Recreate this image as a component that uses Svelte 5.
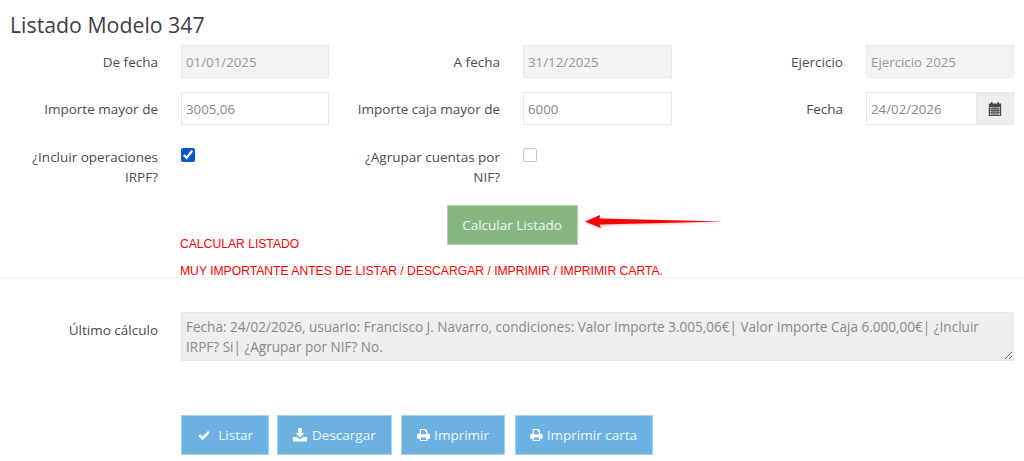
<script>
  // Buttons at the bottom of the listing form
  const actions = [
    { label: "Listar", icon: "check" },
    { label: "Descargar", icon: "download" },
    { label: "Imprimir", icon: "print" },
    { label: "Imprimir carta", icon: "print" }
  ];

  let incluirIrpf = true;
  let agruparNif = false;

  const ultimoCalculo =
    "Fecha: 24/02/2026, usuario: Francisco J. Navarro, condiciones: Valor Importe 3.005,06€| Valor Importe Caja 6.000,00€| ¿Incluir IRPF? Si| ¿Agrupar por NIF? No.";
</script>

<div class="page">
  <h1>Listado Modelo 347</h1>

  <form class="grid" on:submit|preventDefault>
    <label for="de">De fecha</label>
    <input id="de" class="ctl" value="01/01/2025" disabled />
    <label for="a">A fecha</label>
    <input id="a" class="ctl" value="31/12/2025" disabled />
    <label for="ej">Ejercicio</label>
    <input id="ej" class="ctl" value="Ejercicio 2025" disabled />

    <label for="imp">Importe mayor de</label>
    <input id="imp" class="ctl" value="3005,06" />
    <label for="caja">Importe caja mayor de</label>
    <input id="caja" class="ctl" value="6000" />
    <label for="fecha">Fecha</label>
    <div class="group">
      <input id="fecha" class="ctl" value="24/02/2026" />
      <span class="addon">
        <svg width="14" height="14" viewBox="0 0 14 14" aria-hidden="true">
          <path fill="#4a4a4a" d="M3 0h1.5v1.5h5V0H11v1.5h2.2V14H.8V1.5H3zM2 5v8h10V5z" />
          <path stroke="#4a4a4a" stroke-width="1" d="M2 6.7h10M2 8.7h10M2 10.8h10M4 5v8M6 5v8M8 5v8M10 5v8" />
        </svg>
      </span>
    </div>

    <label for="irpf" class="tall">¿Incluir operaciones IRPF?</label>
    <div class="check"><input id="irpf" type="checkbox" bind:checked={incluirIrpf} /></div>
    <label for="nif" class="tall">¿Agrupar cuentas por NIF?</label>
    <div class="check"><input id="nif" type="checkbox" bind:checked={agruparNif} /></div>
  </form>

  <div class="calc">
    <button type="button" class="btn calc-btn">Calcular Listado</button>
    <svg class="arrow" width="140" height="20" viewBox="0 0 140 20" aria-hidden="true">
      <path fill="#f00" d="M1 9.5 16 3 15.5 6.5 139 9.5 15.5 12.5 17 16z" />
    </svg>
  </div>

  <div class="notes">
    <p>CALCULAR LISTADO</p>
    <p>MUY IMPORTANTE ANTES DE LISTAR / DESCARGAR / IMPRIMIR / IMPRIMIR CARTA.</p>
  </div>

  <hr />

  <div class="last">
    <label for="ultimo">Último cálculo</label>
    <textarea id="ultimo" rows="2" readonly value={ultimoCalculo}></textarea>
  </div>

  <div class="actions">
    {#each actions as action}
      <button type="button" class="btn action">
        <svg width="14" height="14" viewBox="0 0 14 14" aria-hidden="true">
          {#if action.icon === "check"}
            <path fill="none" stroke="#fff" stroke-width="3" d="M1.5 7.2 5.2 10.8 12.5 3.4" />
          {:else if action.icon === "download"}
            <path fill="#fff" d="M5.2 0h3.6v5h2.6L7 9.6 2.6 5h2.6zM0 9h3.8L7 11.4 10.2 9H14v4.6H0zM10.6 11.2h1v1h-1z" />
          {:else}
            <path fill="#fff" fill-rule="evenodd" d="M3 .5h6.2L11 2.3V5.5h1.2c.9 0 1.5.6 1.5 1.5v4.2H11v2.3H3v-2.3H.3V7c0-.9.6-1.5 1.5-1.5H3zM4.2 1.6v4.6h5.6V3.4H8.5V1.6zM4.2 9.7v2.7h5.6V9.7z" />
          {/if}
        </svg>
        <span>{action.label}</span>
      </button>
    {/each}
  </div>
</div>

<style>
  :global(body) {
    background: #fff;
  }

  .page {
    font-family: "Open Sans", sans-serif;
    font-size: 13.5px;
    color: #4c4c4c;
    height: 461px;
    overflow: hidden;
    position: relative;
  }

  h1 {
    margin: 0;
    padding: 11px 0 0 10px;
    font-size: 21.3px;
    line-height: 28px;
    font-weight: 400;
    color: #3f3f3f;
  }

  .grid {
    display: grid;
    grid-template-columns: 158px 148px 148px 149px 148px 148px;
    column-gap: 23px;
    row-gap: 14px;
    margin-top: 6px;
  }

  label {
    text-align: right;
    line-height: 20px;
    padding-top: 7px;
    color: #4c4c4c;
  }

  label.tall {
    padding-top: 8px;
    padding-left: 12px;
  }

  .ctl {
    box-sizing: border-box;
    width: 100%;
    height: 33px;
    padding: 0 4px;
    border: 1px solid #e8e8e8;
    background: #fff;
    color: #888;
    font: inherit;
    font-size: 13.3px;
    outline: none;
    margin: 0;
    min-width: 0;
  }

  .ctl:disabled {
    background: #f3f3f3;
    color: #999;
    opacity: 1;
  }

  .group {
    display: flex;
  }

  .addon {
    flex: 0 0 37px;
    height: 33px;
    box-sizing: border-box;
    border: 1px solid #e8e8e8;
    border-left: none;
    background: #eee;
    display: flex;
    align-items: center;
    justify-content: center;
  }

  .check {
    padding-top: 9px;
  }

  .check input {
    display: block;
    width: 14px;
    height: 14px;
    margin: 0;
    accent-color: #0b57d0;
  }

  .check input:not(:checked) {
    appearance: none;
    box-sizing: border-box;
    border: 1px solid #c8c8cc;
    border-radius: 2px;
    background: #fff;
  }

  .calc {
    position: relative;
    display: flex;
    justify-content: center;
    margin-top: 18px;
  }

  .btn {
    font: inherit;
    border: 1px solid rgba(255, 255, 255, 0.35);
    color: #f2f2f2;
    cursor: pointer;
    white-space: nowrap;
  }

  .calc-btn {
    box-sizing: border-box;
    width: 131px;
    height: 40px;
    background: #86b783;
    color: #eef5ed;
  }

  .arrow {
    position: absolute;
    left: 584px;
    top: 7px;
    filter: drop-shadow(0 1px 1px rgba(120, 0, 0, 0.25));
  }

  .notes {
    margin-left: 180px;
    margin-top: -8px;
    font-family: "Liberation Sans", sans-serif;
    font-size: 12.15px;
    color: #f00;
  }

  .notes p {
    margin: 0 0 13px;
    line-height: 14px;
  }

  hr {
    margin: -14px 0 0;
    border: none;
    border-top: 1px solid #f2f2f2;
  }

  .last {
    display: grid;
    grid-template-columns: 158px 833px;
    column-gap: 23px;
    margin-top: 34px;
  }

  .last label {
    padding-top: 8px;
  }

  textarea {
    box-sizing: border-box;
    width: 833px;
    height: 49px;
    margin: 0;
    padding: 4px 4px;
    border: 1px solid #e6e6e6;
    background: #eee;
    color: #8a8a8a;
    font: inherit;
    font-size: 13.55px;
    line-height: 20px;
    outline: none;
    display: block;
  }

  .actions {
    display: flex;
    gap: 8px;
    margin: 54px 0 0 181px;
  }

  .action {
    box-sizing: border-box;
    height: 40px;
    background: #6db1e0;
    border-color: #a9d2ee;
    display: flex;
    align-items: center;
    gap: 4px;
    padding: 0 15px;
    color: #eef6fc;
  }

  .actions .action:nth-child(1) {
    width: 88px;
    padding-left: 16px;
    gap: 8px;
  }

  .actions .action:nth-child(2) {
    width: 115px;
    gap: 5px;
  }

  .actions .action:nth-child(3) {
    width: 104px;
    margin-left: 1px;
  }

  .actions .action:nth-child(4) {
    width: 138px;
    margin-left: 2px;
    padding-left: 14px;
  }
</style>
